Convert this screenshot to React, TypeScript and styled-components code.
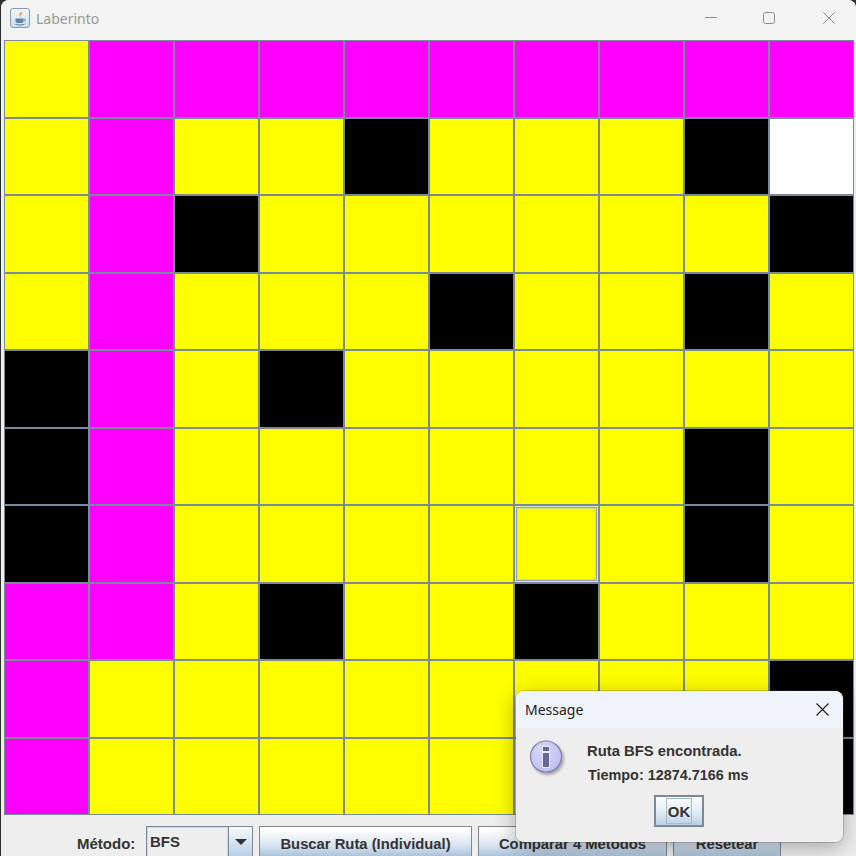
import React from "react";
import styled, { createGlobalStyle } from "styled-components";

const Global = createGlobalStyle`
  html, body { margin: 0; padding: 0; background: #2e2e2e; overflow: hidden; }
  #root { width: 856px; height: 856px; overflow: hidden; }
`;

const Screen = styled.div`
  position: relative;
  width: 856px;
  height: 856px;
  overflow: hidden;
  background: #2e2e2e;
`;

const Window = styled.div`
  margin-left: 1px;
  width: 855px;
  height: 856px;
  background: #eeeeee;
  border-radius: 8px 8px 0 0;
  display: flex;
  flex-direction: column;
`;

const TitleBar = styled.div`
  height: 36px;
  padding-bottom: 4px;
  flex: none;
  display: flex;
  align-items: center;
  background: #f3f3f3;
  border-radius: 8px 8px 0 0;
`;

const AppIcon = styled.svg`
  width: 20px;
  height: 20px;
  margin-left: 9px;
  margin-right: 6px;
  flex: none;
`;

const WindowTitle = styled.span`
  flex: 1;
  font: 14px "Noto Sans", "Open Sans", sans-serif;
  color: #9a9a9a;
`;

const CaptionIcon = styled.svg<{ $gap: number }>`
  width: 12px;
  height: 12px;
  flex: none;
  margin-right: ${(p) => p.$gap}px;
`;

const Board = styled.div`
  margin-left: 3px;
  width: 850px;
  height: 775px;
  flex: none;
  display: grid;
  grid-template-columns: repeat(10, 85px);
  grid-template-rows: repeat(10, 1fr);
`;

const COLORS: Record<string, string> = {
  Y: "#ffff00",
  F: "#ffff00",
  M: "#ff00ff",
  K: "#000000",
  W: "#ffffff",
};

const Cell = styled.div<{ $kind: string }>`
  box-sizing: border-box;
  border: 1px solid #7a8a99;
  background: ${(p) => COLORS[p.$kind]};
  ${(p) =>
    p.$kind === "F"
      ? "box-shadow: inset 0 0 0 1px #dfe6c0, inset 0 0 0 2px #8fa5c8, inset 0 0 0 3px #d6e070;"
      : ""}
`;

const Controls = styled.div`
  flex: none;
  display: flex;
  align-items: flex-start;
  padding: 11px 0 0 76px;
  gap: 6px;
`;

const Label = styled.span`
  font: bold 15px "Liberation Sans", Arial, sans-serif;
  color: #333333;
  width: 58px;
  margin-right: 5px;
  line-height: 36px;
`;

const Combo = styled.div`
  box-sizing: border-box;
  width: 107px;
  height: 32px;
  display: flex;
  border: 1px solid #7a8a99;
  background: #eeeeee;
`;

const ComboValue = styled.div`
  flex: 1;
  box-sizing: border-box;
  padding: 0 0 0 2px;
  border: 1px solid #c8d8e8;
  font: bold 15px "Liberation Sans", Arial, sans-serif;
  line-height: 27px;
  color: #333333;
`;

const ComboArrow = styled.div`
  box-sizing: border-box;
  width: 24px;
  border-left: 1px solid #7a8a99;
  display: flex;
  justify-content: center;
  padding-top: 12px;
  background: linear-gradient(#f6f9fc, #b8cfe5);
  &::after {
    content: "";
    width: 0;
    height: 0;
    border-left: 6px solid transparent;
    border-right: 6px solid transparent;
    border-top: 6px solid #333333;
  }
`;

const Button = styled.div<{ $w: number }>`
  box-sizing: border-box;
  width: ${(p) => p.$w}px;
  height: 32px;
  border: 1px solid #7a8a99;
  background: linear-gradient(#ffffff, #ffffff 10%, #d9e5f1 60%, #a8c0d8);
  font: bold 14.8px "Liberation Sans", Arial, sans-serif;
  color: #333333;
  text-align: center;
  line-height: 34px;
`;

const DialogShadow = styled.div`
  position: absolute;
  left: 516px;
  top: 691px;
  width: 327px;
  height: 151px;
  border-radius: 8px;
  box-shadow: 0 5px 22px rgba(0, 0, 0, 0.32), 0 0 0 1px rgba(90, 90, 90, 0.25);
`;

const Dialog = styled.div`
  position: absolute;
  left: 516px;
  top: 691px;
  width: 327px;
  height: 151px;
  border-radius: 8px;
  overflow: hidden;
  background: #eeeeee;
  display: flex;
  flex-direction: column;
`;

const DialogTitle = styled.div`
  height: 37px;
  flex: none;
  display: flex;
  align-items: center;
  justify-content: space-between;
  padding: 0 14px 0 9px;
  background: #eff3fa;
  font: 14px "Noto Sans", "Open Sans", sans-serif;
  color: #1c1c1c;
`;

const DialogBody = styled.div`
  display: flex;
  padding: 12px 0 0 14px;
`;

const InfoIcon = styled.svg`
  width: 36px;
  height: 38px;
  flex: none;
`;

const Messages = styled.div`
  margin-left: 21px;
  margin-top: -1px;
  font: bold 14.8px "Liberation Sans", Arial, sans-serif;
  color: #333333;
`;

const MessageLine = styled.div<{ $indent?: number; $size?: number }>`
  height: 24px;
  line-height: 24px;
  padding-left: ${(p) => p.$indent ?? 0}px;
  font-size: ${(p) => p.$size ?? 14.8}px;
`;

const DialogActions = styled.div`
  display: flex;
  justify-content: center;
  padding: 8px 1px 0 0;
`;

const OkButton = styled.div`
  box-sizing: border-box;
  width: 50px;
  height: 32px;
  padding: 2px;
  border: 1px solid #7a8a99;
  box-shadow: inset 0 0 0 1px #7a8a99;
  background: linear-gradient(#ffffff, #e4edf6 50%, #b8cfe5);
  display: flex;
  justify-content: center;
  align-items: center;
`;

const OkFocus = styled.div`
  box-sizing: border-box;
  width: 26px;
  height: 26px;
  border: 1px solid #a3bbd3;
  display: flex;
  justify-content: center;
  align-items: center;
  font: bold 15px "Liberation Sans", Arial, sans-serif;
  color: #333333;
`;

const ROWS = [
  "YMMMMMMMMM",
  "YMYYKYYYKW",
  "YMKYYYYYYK",
  "YMYYYKYYKY",
  "KMYKYYYYYY",
  "KMYYYYYYKY",
  "KMYYYYFYKY",
  "MMYKYYKYYY",
  "MYYYYYYYYK",
  "MYYYYYYYYK",
];

const JavaIcon = () => (
  <AppIcon viewBox="0 0 20 20">
    <defs>
      <linearGradient id="javaBg" x1="0" y1="0" x2="0" y2="1">
        <stop offset="0" stopColor="#f4f8fb" />
        <stop offset="1" stopColor="#cfdde9" />
      </linearGradient>
    </defs>
    <rect x="0.5" y="0.5" width="19" height="19" rx="2.5" fill="url(#javaBg)" stroke="#7f9db8" />
    <path d="M10.5 3c1.5 1.5-1.8 2.6-1 4.4.3.7 1 1 1.2 1.6-.2-1.2-.6-1.6-.2-2.5.6-1 2.5-1.6 0-3.5z" fill="#e8833a" />
    <path d="M12.6 5c-1 .7-1.3 1.3-1 2.2" stroke="#f0a868" strokeWidth="0.9" fill="none" />
    <path d="M5.5 10.5h8v2.4c0 1.2-1 2-2 2h-4c-1 0-2-.8-2-2z" fill="#5f86a8" />
    <path d="M13.5 11h1.2c1 0 1 2-.6 2.3" stroke="#5f86a8" strokeWidth="0.9" fill="none" />
    <path d="M4 15.6c2.5 1.3 8.5 1.3 11.5 0-.8 1.4-2.7 1.8-5.7 1.8S5 17 4 15.6z" fill="#4c7395" />
  </AppIcon>
);

const Info = () => (
  <InfoIcon viewBox="0 0 36 38">
    <defs>
      <radialGradient id="infoFill" cx="0.4" cy="0.35" r="0.75">
        <stop offset="0" stopColor="#d8d8fc" />
        <stop offset="1" stopColor="#bcbcf0" />
      </radialGradient>
      <filter id="infoShadow" x="-30%" y="-30%" width="170%" height="170%">
        <feGaussianBlur stdDeviation="1.8" />
      </filter>
    </defs>
    <circle cx="18" cy="19" r="16" fill="#000" opacity="0.3" filter="url(#infoShadow)" />
    <circle cx="16" cy="16.5" r="15.5" fill="url(#infoFill)" stroke="#7e7eb2" strokeWidth="1.2" />
    <rect x="12" y="6" width="8" height="22" fill="#ebebff" />
    <rect x="13" y="7" width="6" height="4" fill="#66669a" />
    <rect x="13" y="13" width="6" height="14" fill="#66669a" />
  </InfoIcon>
);

export default function App() {
  return (
    <>
      <Global />
      <Screen>
        <Window>
          <TitleBar>
            <JavaIcon />
            <WindowTitle>Laberinto</WindowTitle>
            <CaptionIcon $gap={46} viewBox="0 0 12 12">
              <path d="M0 5.5h12" stroke="#8c8c8c" strokeWidth="1" />
            </CaptionIcon>
            <CaptionIcon $gap={48} viewBox="0 0 12 12">
              <rect x="0.5" y="0.5" width="11" height="11" rx="2" fill="none" stroke="#8c8c8c" />
            </CaptionIcon>
            <CaptionIcon $gap={21} viewBox="0 0 12 12">
              <path d="M0.3 0.3l11.4 11.4M11.7 0.3L0.3 11.7" stroke="#8c8c8c" strokeWidth="1" />
            </CaptionIcon>
          </TitleBar>
          <Board>
            {ROWS.flatMap((row, r) =>
              row.split("").map((kind, c) => <Cell key={`${r}-${c}`} $kind={kind} />)
            )}
          </Board>
          <Controls>
            <Label>Método:</Label>
            <Combo>
              <ComboValue>BFS</ComboValue>
              <ComboArrow />
            </Combo>
            <Button $w={213}>Buscar Ruta (Individual)</Button>
            <Button $w={189}>Comparar 4 Métodos</Button>
            <Button $w={108}>Resetear</Button>
          </Controls>
        </Window>
        <DialogShadow />
        <Dialog>
          <DialogTitle>
            <span>Message</span>
            <svg width="13" height="13" viewBox="0 0 13 13">
              <path d="M0.5 0.5l12 12M12.5 0.5l-12 12" stroke="#1c1c1c" strokeWidth="1.1" />
            </svg>
          </DialogTitle>
          <DialogBody>
            <Info />
            <Messages>
              <MessageLine>Ruta BFS encontrada.</MessageLine>
              <MessageLine $indent={1} $size={14.4}>Tiempo: 12874.7166 ms</MessageLine>
            </Messages>
          </DialogBody>
          <DialogActions>
            <OkButton>
              <OkFocus>OK</OkFocus>
            </OkButton>
          </DialogActions>
        </Dialog>
      </Screen>
    </>
  );
}
